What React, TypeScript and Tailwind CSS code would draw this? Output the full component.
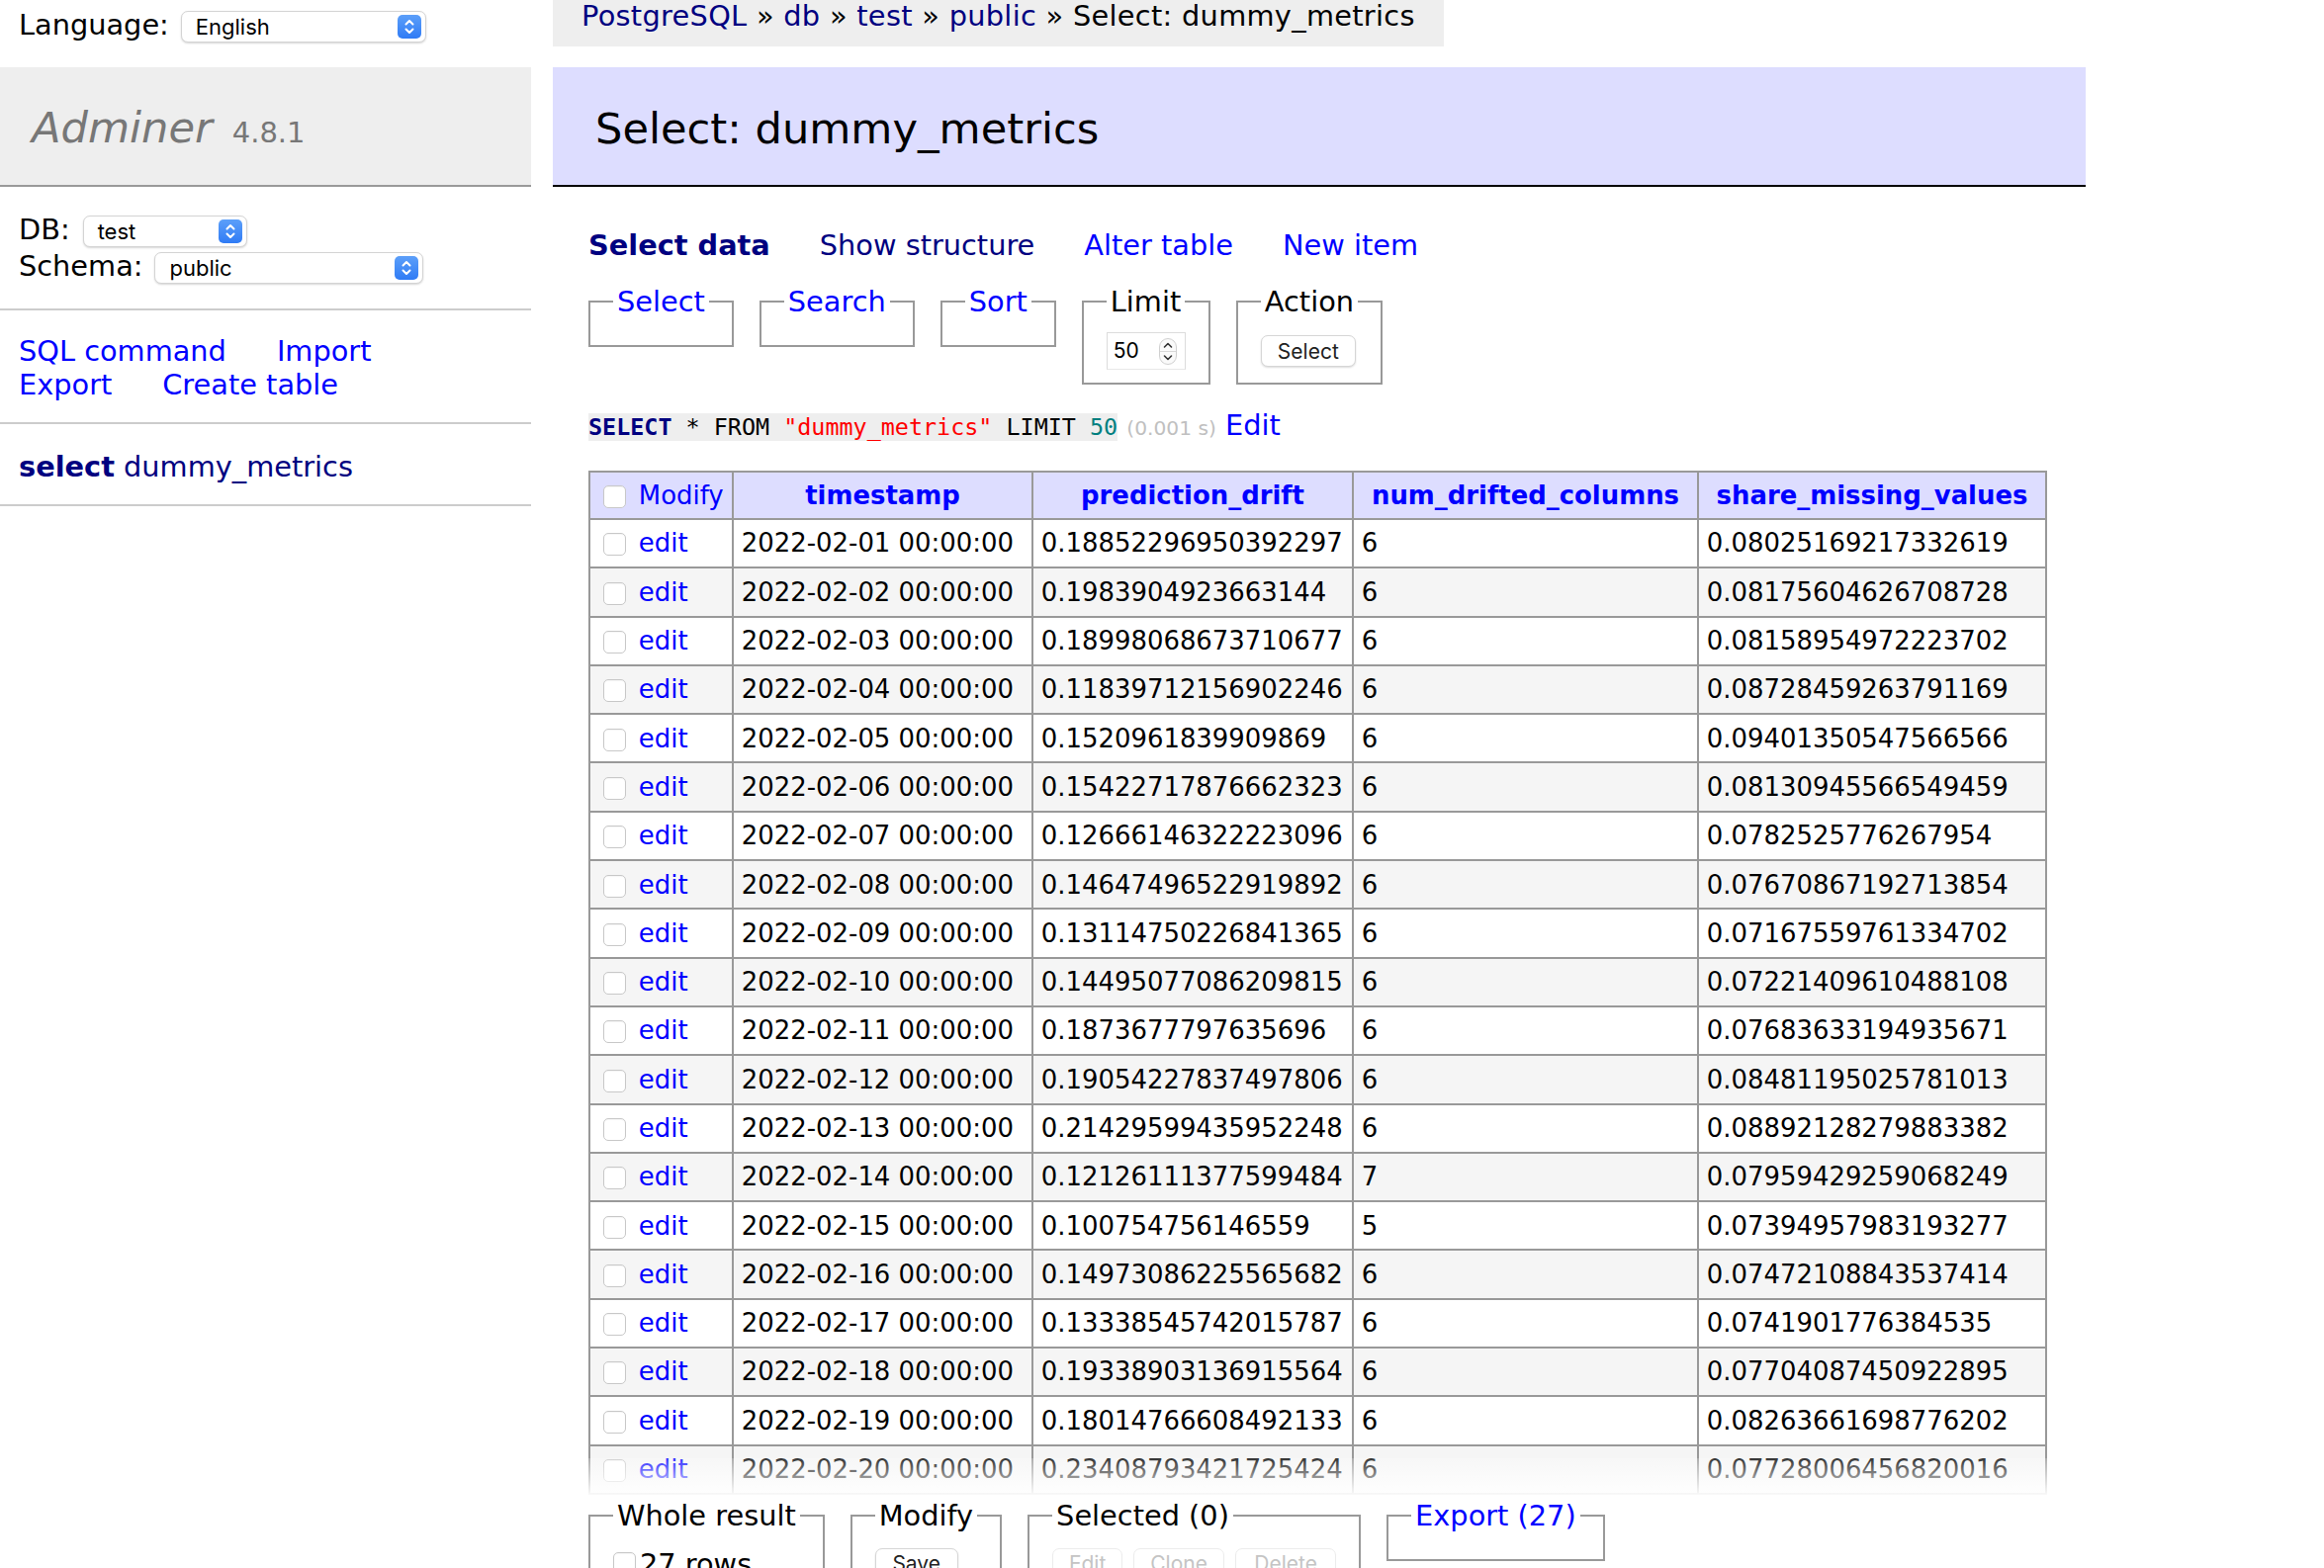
import React from "react"

// Adminer 4.8.1 "Select: dummy_metrics" page, rendered at 2x.
const rows = [
  ["2022-02-01 00:00:00", "0.18852296950392297", "6", "0.08025169217332619"],
  ["2022-02-02 00:00:00", "0.1983904923663144", "6", "0.08175604626708728"],
  ["2022-02-03 00:00:00", "0.18998068673710677", "6", "0.08158954972223702"],
  ["2022-02-04 00:00:00", "0.11839712156902246", "6", "0.08728459263791169"],
  ["2022-02-05 00:00:00", "0.1520961839909869", "6", "0.09401350547566566"],
  ["2022-02-06 00:00:00", "0.15422717876662323", "6", "0.08130945566549459"],
  ["2022-02-07 00:00:00", "0.12666146322223096", "6", "0.0782525776267954"],
  ["2022-02-08 00:00:00", "0.14647496522919892", "6", "0.07670867192713854"],
  ["2022-02-09 00:00:00", "0.13114750226841365", "6", "0.07167559761334702"],
  ["2022-02-10 00:00:00", "0.14495077086209815", "6", "0.07221409610488108"],
  ["2022-02-11 00:00:00", "0.1873677797635696", "6", "0.07683633194935671"],
  ["2022-02-12 00:00:00", "0.19054227837497806", "6", "0.08481195025781013"],
  ["2022-02-13 00:00:00", "0.21429599435952248", "6", "0.08892128279883382"],
  ["2022-02-14 00:00:00", "0.12126111377599484", "7", "0.07959429259068249"],
  ["2022-02-15 00:00:00", "0.100754756146559", "5", "0.07394957983193277"],
  ["2022-02-16 00:00:00", "0.14973086225565682", "6", "0.07472108843537414"],
  ["2022-02-17 00:00:00", "0.13338545742015787", "6", "0.0741901776384535"],
  ["2022-02-18 00:00:00", "0.19338903136915564", "6", "0.07704087450922895"],
  ["2022-02-19 00:00:00", "0.18014766608492133", "6", "0.08263661698776202"],
  ["2022-02-20 00:00:00", "0.23408793421725424", "6", "0.07728006456820016"],
]

function MacSelect({ value, className }: { value: string; className: string }) {
  return (
    <div className={`relative flex h-[32px] items-center rounded-[7px] border border-[#d4d4d4] bg-white pl-[14px] shadow-[0_1px_2px_rgba(0,0,0,0.16)] ${className}`}>
      <span className="font-['Inter',sans-serif] text-[22px] leading-none text-black">{value}</span>
      <span className="absolute right-[4px] top-[3px] flex h-[24px] w-[24px] items-center justify-center rounded-[5px] bg-linear-to-b from-[#5c9ff9] to-[#2f7bf5]">
        <svg width="14" height="18" viewBox="0 0 14 18" fill="none" stroke="white" strokeWidth="2" strokeLinecap="round" strokeLinejoin="round">
          <path d="M3.5 6.5 L7 3 L10.5 6.5" />
          <path d="M3.5 11.5 L7 15 L10.5 11.5" />
        </svg>
      </span>
    </div>
  )
}

function Checkbox({ className = "" }: { className?: string }) {
  return (
    <span className={`inline-block h-[23px] w-[23px] rounded-[5px] border border-[#c8c8c8] bg-white align-middle shadow-[inset_0_1px_1px_rgba(0,0,0,0.04)] ${className}`} />
  )
}

function MacButton({ label, className = "", disabled = false }: { label: string; className?: string; disabled?: boolean }) {
  return (
    <span
      className={`flex h-[32px] items-center justify-center rounded-[7px] border bg-white font-['Inter',sans-serif] text-[21px] leading-none ${
        disabled ? "border-[#ececec] text-[#c4c4c4]" : "border-[#d6d6d6] text-[#222] shadow-[0_1px_2px_rgba(0,0,0,0.14)]"
      } ${className}`}
    >
      {label}
    </span>
  )
}

function Sidebar() {
  return (
    <aside className="w-[537px] shrink-0 text-[28.8px]">
      <div className="flex h-[68px] items-start pl-[19px] pt-[7px]">
        <span className="leading-[36px]">Language:</span>
        <MacSelect value="English" className="ml-[12px] mt-[4px] w-[248px]" />
      </div>

      <div className="h-[121px] whitespace-nowrap border-b-2 border-[#999] bg-[#eee] pl-[32px] pt-[34px] text-[#777]">
        <span className="text-[43.2px] italic leading-[54px]">Adminer</span>
        <span className="ml-[20px] text-[29px]">4.8.1</span>
      </div>

      <div className="h-[125px] border-b-2 border-[#ccc] pl-[19px] pt-[25px]">
        <div className="flex items-start">
          <span className="leading-[36px]">DB:</span>
          <MacSelect value="test" className="ml-[13px] mt-[4px] w-[166px]" />
        </div>
        <div className="mt-[1px] flex items-start">
          <span className="leading-[36px]">Schema:</span>
          <MacSelect value="public" className="ml-[12px] mt-[4px] w-[272px]" />
        </div>
      </div>

      <div className="h-[115px] border-b-2 border-[#ccc] pl-[19px] pt-[24px] leading-[34px] text-[#0000ff]">
        <div className="flex gap-[51px] whitespace-nowrap">
          <a>SQL command</a>
          <a>Import</a>
        </div>
        <div className="flex gap-[51px] whitespace-nowrap">
          <a>Export</a>
          <a>Create table</a>
        </div>
      </div>

      <div className="h-[83px] whitespace-nowrap border-b-2 border-[#ccc] pl-[19px] pt-[25px] leading-[36px] text-[#000080]">
        <a className="font-bold">select</a> <a>dummy_metrics</a>
      </div>
    </aside>
  )
}

function Fieldset({ legend, link = false, children, className = "" }: { legend: string; link?: boolean; children?: React.ReactNode; className?: string }) {
  return (
    <fieldset className={`border-2 border-[#999] px-[23px] pb-[13px] pt-[13px] ${className}`}>
      <legend className={`px-[4px] leading-[36px] whitespace-nowrap ${link ? "text-[#0000ff]" : "text-black"}`}>{legend}</legend>
      {children}
    </fieldset>
  )
}

function Content() {
  return (
    <main className="ml-[22px] w-[1550px] text-[28.8px]">
      <div className="h-[47px] w-fit whitespace-nowrap bg-[#eee] px-[29px] leading-[32px] tracking-[0.3px]">
        <a className="text-[#000080]">PostgreSQL</a> » <a className="text-[#000080]">db</a> » <a className="text-[#000080]">test</a> »{" "}
        <a className="text-[#000080]">public</a> » Select: dummy_metrics
      </div>

      <h2 className="mt-[21px] h-[121px] whitespace-nowrap border-b-2 border-black bg-[#ddf] pl-[43px] pt-[35px] text-[43.2px] font-normal leading-[54px]">
        Select: dummy_metrics
      </h2>

      <div className="pl-[36px]">
        <div className="mt-[41px] flex h-[36px] gap-[50px] whitespace-nowrap leading-[36px]">
          <a className="font-bold text-[#000080]">Select data</a>
          <a className="text-[#000080]">Show structure</a>
          <a className="text-[#0000ff]">Alter table</a>
          <a className="text-[#0000ff]">New item</a>
        </div>

        <div className="mt-[21px] flex items-start gap-[26px]">
          <Fieldset legend="Select" link />
          <Fieldset legend="Search" link />
          <Fieldset legend="Sort" link />
          <Fieldset legend="Limit">
            <div className="relative flex h-[38px] w-[80px] items-center border border-[#dcdcdc] border-b-[#e8e8e8] bg-white pl-[6px] font-['Inter',sans-serif] text-[21px]">
              50
              <svg className="absolute right-[8px] top-[5px]" width="18" height="27" viewBox="0 0 18 27" fill="none">
                <rect x="0.5" y="0.5" width="17" height="26" rx="8.5" fill="#fafafa" stroke="#d0d0d0" />
                <line x1="1" y1="13.5" x2="17" y2="13.5" stroke="#d8d8d8" />
                <path d="M5.5 9 L9 5.5 L12.5 9" stroke="#333" strokeWidth="1.6" strokeLinecap="round" strokeLinejoin="round" />
                <path d="M5.5 18 L9 21.5 L12.5 18" stroke="#333" strokeWidth="1.6" strokeLinecap="round" strokeLinejoin="round" />
              </svg>
            </div>
          </Fieldset>
          <Fieldset legend="Action">
            <div className="flex h-[38px] items-center">
              <MacButton label="Select" className="w-[96px]" />
            </div>
          </Fieldset>
        </div>

        <p className="mt-[23px] whitespace-nowrap leading-[36px]">
          <code className="bg-[#eee] font-['DejaVu_Sans_Mono',monospace] text-[23.4px]">
            <a className="font-bold text-[#000080]">SELECT</a> * FROM <span className="text-[#ff0000]">"dummy_metrics"</span> LIMIT{" "}
            <span className="text-[#007f7f]">50</span>
          </code>{" "}
          <span className="text-[20.2px] text-[#c0c0c0]">(0.001 s)</span> <a className="text-[#0000ff]">Edit</a>
        </p>

        <table className="mt-[25px] w-[1473px] table-fixed border-collapse whitespace-nowrap text-[25.92px] leading-[32.4px]">
          <colgroup>
            <col className="w-[145px]" />
            <col className="w-[303px]" />
            <col className="w-[324px]" />
            <col className="w-[349px]" />
            <col className="w-[352px]" />
          </colgroup>
          <thead>
            <tr className="h-[48px] bg-[#ddf]">
              <td className="border-2 border-[#999] px-[7.8px] text-[#0000ff]">
                <Checkbox className="ml-[5px] mr-[13px]" />
                <a>Modify</a>
              </td>
              {["timestamp", "prediction_drift", "num_drifted_columns", "share_missing_values"].map((h) => (
                <th key={h} className="border-2 border-[#999] px-[13px] text-center font-bold text-[#0000ff]">
                  <a>{h}</a>
                </th>
              ))}
            </tr>
          </thead>
          <tbody>
            {rows.map((r, i) => (
              <tr key={i} className={`h-[49.3px] ${i % 2 === 1 ? "bg-[#f5f5f5]" : "bg-white"}`}>
                <td className="border-2 border-[#999] px-[7.8px]">
                  <Checkbox className="ml-[5px] mr-[13px]" />
                  <a className="text-[#0000ff]">edit</a>
                </td>
                {r.map((c, j) => (
                  <td key={j} className="border-2 border-[#999] px-[7.8px]">
                    {c}
                  </td>
                ))}
              </tr>
            ))}
          </tbody>
        </table>

        <div className="relative -mt-[37px] w-[1513px]">
          <div className="h-[40px] bg-linear-to-b from-white/20 to-white" />
          <div className="flex items-start gap-[26px] bg-white pb-[14px]">
            <Fieldset legend="Whole result">
              <div className="flex h-[36px] items-center leading-[36px]">
                <Checkbox className="mr-[4px]" />
                27 rows
              </div>
            </Fieldset>
            <Fieldset legend="Modify">
              <div className="flex h-[36px] items-center">
                <MacButton label="Save" className="w-[84px]" />
              </div>
            </Fieldset>
            <Fieldset legend="Selected (0)">
              <div className="flex h-[36px] items-center gap-[11px]">
                <MacButton label="Edit" className="w-[71px]" disabled />
                <MacButton label="Clone" className="w-[92px]" disabled />
                <MacButton label="Delete" className="w-[102px]" disabled />
              </div>
            </Fieldset>
            <Fieldset legend="Export (27)" link />
          </div>
        </div>
      </div>
    </main>
  )
}

export default function App() {
  return (
    <div className="h-[1586px] w-[2350px] overflow-hidden bg-white font-['DejaVu_Sans',Verdana,sans-serif] text-black">
      <div className="flex items-start">
        <Sidebar />
        <Content />
      </div>
    </div>
  )
}
